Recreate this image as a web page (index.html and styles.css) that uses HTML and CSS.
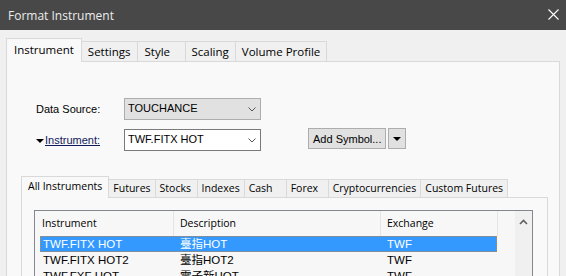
FILE: index.html
```html
<!DOCTYPE html>
<html lang="en">
<head>
    <meta charset="UTF-8">
    <title>Format Instrument</title>
    <link rel="stylesheet" href="styles.css">
</head>
<body>
    <div class="window">
        <div class="titlebar">
            <span class="title">Format Instrument</span>
            <svg class="close" width="11" height="11" viewBox="0 0 11 11">
                <path d="M0.5 0.5 L10.5 10.5 M10.5 0.5 L0.5 10.5" stroke="#ffffff" stroke-width="1.1" fill="none"/>
            </svg>
        </div>

        <div class="dialog">
            <div class="tabs">
                <div class="tab active">Instrument</div>
                <div class="tab">Settings</div>
                <div class="tab tab-style">Style</div>
                <div class="tab">Scaling</div>
                <div class="tab">Volume Profile</div>
            </div>

            <div class="panel">
                <div class="form">
                    <label class="label">Data Source:</label>
                    <div class="combo combo-locked">
                        <span>TOUCHANCE</span>
                        <svg width="8" height="5" viewBox="0 0 8 5"><path d="M0.5 0.5 L4 4 L7.5 0.5" stroke="#555" fill="none"/></svg>
                    </div>
                    <span></span>

                    <label class="label label-link">
                        <svg width="8" height="4" viewBox="0 0 8 4"><path d="M0 0 H8 L4 4 Z" fill="#000"/></svg>
                        <u>Instrument:</u>
                    </label>
                    <div class="combo">
                        <span>TWF.FITX HOT</span>
                        <svg width="8" height="5" viewBox="0 0 8 5"><path d="M0.5 0.5 L4 4 L7.5 0.5" stroke="#555" fill="none"/></svg>
                    </div>
                    <div class="actions">
                        <button class="btn">Add Symbol...</button>
                        <button class="btn btn-drop">
                            <svg width="8" height="4" viewBox="0 0 8 4"><path d="M0 0 H8 L4 4 Z" fill="#000"/></svg>
                        </button>
                    </div>
                </div>

                <div class="subtabs">
                    <div class="subtab active">All Instruments</div>
                    <div class="subtab">Futures</div>
                    <div class="subtab">Stocks</div>
                    <div class="subtab">Indexes</div>
                    <div class="subtab">Cash</div>
                    <div class="subtab">Forex</div>
                    <div class="subtab">Cryptocurrencies</div>
                    <div class="subtab">Custom Futures</div>
                </div>

                <div class="subpanel">
                    <div class="listview">
                        <div class="list-main">
                            <div class="list-header">
                                <div class="col col-1">Instrument</div>
                                <div class="col col-2">Description</div>
                                <div class="col col-3">Exchange</div>
                            </div>
                            <div class="row selected">
                                <div class="cell cell-1">TWF.FITX HOT</div>
                                <div class="cell cell-2">臺指HOT</div>
                                <div class="cell cell-3">TWF</div>
                            </div>
                            <div class="row">
                                <div class="cell cell-1">TWF.FITX HOT2</div>
                                <div class="cell cell-2">臺指HOT2</div>
                                <div class="cell cell-3">TWF</div>
                            </div>
                            <div class="row">
                                <div class="cell cell-1">TWF.FXF HOT</div>
                                <div class="cell cell-2">電子新HOT</div>
                                <div class="cell cell-3">TWF</div>
                            </div>
                        </div>
                        <div class="scrollbar">
                            <svg width="9" height="6" viewBox="0 0 9 6"><path d="M1 5 L4.5 1.5 L8 5" stroke="#606060" stroke-width="1.6" fill="none"/></svg>
                        </div>
                    </div>
                </div>
            </div>
        </div>
    </div>
</body>
</html>
```

FILE: styles.css
```css
/* General Styles */
body {
    margin: 0;
    background-color: #f0f0f0;
}

.window {
    width: 566px;
    height: 276px;
    overflow: hidden;
    background-color: #f0f0f0;
    display: flex;
    flex-direction: column;
}

/* Title bar */
.titlebar {
    height: 30px;
    flex: none;
    background-color: #484848;
    display: flex;
    align-items: center;
    justify-content: space-between;
    padding: 0 7px 0 8px;
}

.title {
    font-family: 'Open Sans', sans-serif;
    font-size: 12px;
    color: #ececec;
}

.close {
    margin-top: -1px;
}

/* Outer tabs */
.dialog {
    flex: 1;
    display: flex;
    flex-direction: column;
    padding: 8px 6px 0 6px;
    min-height: 0;
}

.tabs {
    display: flex;
    align-items: flex-end;
    height: 23px;
    position: relative;
    z-index: 1;
}

.tab {
    font-family: 'Open Sans', sans-serif;
    font-size: 11.5px;
    color: #000;
    height: 20px;
    line-height: 19px;
    padding: 0 6px;
    margin-left: -1px;
    border: 1px solid #d9d9d9;
    border-bottom: none;
    background-color: #f0f0f0;
    box-sizing: border-box;
    text-align: center;
    white-space: nowrap;
}

.tab.active {
    height: 24px;
    line-height: 21px;
    padding: 0 7px 0 7px;
    margin-left: 0;
    margin-bottom: -1px;
    background-color: #f9f9f9;
}

.tab-style {
    min-width: 49px;
    text-align: left;
    padding-left: 7px;
}

.panel {
    flex: 1;
    border: 1px solid #d9d9d9;
    border-bottom: none;
    background-color: #f9f9f9;
    padding: 36px 11px 0 14px;
}

/* Form */
.form {
    display: grid;
    grid-template-columns: 88px 137px auto;
    row-gap: 9px;
    margin-left: 15px;
    align-items: center;
    font-family: 'Liberation Sans', Arial, sans-serif;
    font-size: 11px;
}

.label {
    color: #000;
    display: flex;
    align-items: center;
}

.label-link {
    color: #0f1a5a;
}

.label-link svg {
    margin-right: 1px;
    margin-top: 1px;
}

.combo {
    height: 22px;
    box-sizing: border-box;
    border: 1px solid #7a7a7a;
    background-color: #fff;
    display: flex;
    align-items: center;
    justify-content: space-between;
    padding: 0 3px 0 3px;
    color: #000;
}

.combo span {
    margin-top: -2px;
}

.combo svg {
    margin-right: 1px;
}

.combo-locked {
    background-color: #e1e1e1;
    border-color: #adadad;
}

.actions {
    display: flex;
    gap: 2px;
    align-self: start;
    margin-top: -1px;
    margin-left: 47px;
}

.btn {
    font-family: 'Liberation Sans', Arial, sans-serif;
    font-size: 11px;
    color: #000;
    height: 21px;
    padding: 0 4px;
    background-color: #e1e1e1;
    border: 1px solid #adadad;
    border-radius: 0;
    margin: 0;
}

.btn-drop {
    width: 18px;
    padding: 0;
    display: flex;
    align-items: center;
    justify-content: center;
}

/* Inner tabs */
.subtabs {
    display: flex;
    align-items: flex-end;
    height: 21px;
    margin-top: 25px;
    position: relative;
    z-index: 1;
}

.subtab {
    font-family: 'Open Sans', sans-serif;
    font-size: 10.5px;
    color: #000;
    height: 18px;
    line-height: 17px;
    min-width: 43px;
    padding: 0 4px;
    margin-left: -1px;
    border: 1px solid #d9d9d9;
    border-bottom: none;
    background-color: #f0f0f0;
    box-sizing: border-box;
    white-space: nowrap;
}

.subtab.active {
    height: 22px;
    line-height: 19px;
    padding: 0 6px 0 6px;
    margin-left: 0;
    margin-bottom: -1px;
    background-color: #f9f9f9;
}

.subpanel {
    border: 1px solid #d9d9d9;
    background-color: #f9f9f9;
    padding: 12px 14px 0 12px;
    height: 120px;
}

/* List view */
.listview {
    display: flex;
    border: 1px solid #828790;
    background-color: #f7f7f7;
    height: 100px;
}

.list-main {
    flex: 1;
}

.list-header {
    display: flex;
    height: 25px;
    font-family: 'Open Sans', sans-serif;
    font-size: 10.5px;
    color: #000;
}

.col {
    border-right: 1px solid #e5e5e5;
    padding-left: 6px;
    line-height: 24px;
    box-sizing: border-box;
}

.col-1 {
    width: 139px;
    padding-left: 7px;
}

.col-2 {
    width: 207px;
}

.col-3 {
    width: 117px;
}

.row {
    display: flex;
    height: 16px;
    margin-left: 5px;
    width: 457px;
    font-family: 'Liberation Sans', 'Noto Sans CJK TC', sans-serif;
    font-size: 11.5px;
    line-height: 16px;
    color: #000;
}

.row.selected {
    background-color: #3399ff;
    color: #fff;
    outline: 1px dotted #c8853f;
    outline-offset: -1px;
}

.cell {
    padding-left: 6px;
    box-sizing: border-box;
    white-space: nowrap;
}

.cell-1 {
    width: 134px;
    padding-left: 3px;
}

.cell-2 {
    width: 207px;
}

.cell-3 {
    width: 116px;
}

.scrollbar {
    width: 17px;
    background-color: #f0f0f0;
    display: flex;
    justify-content: center;
    padding-top: 8px;
    box-sizing: border-box;
}
```
